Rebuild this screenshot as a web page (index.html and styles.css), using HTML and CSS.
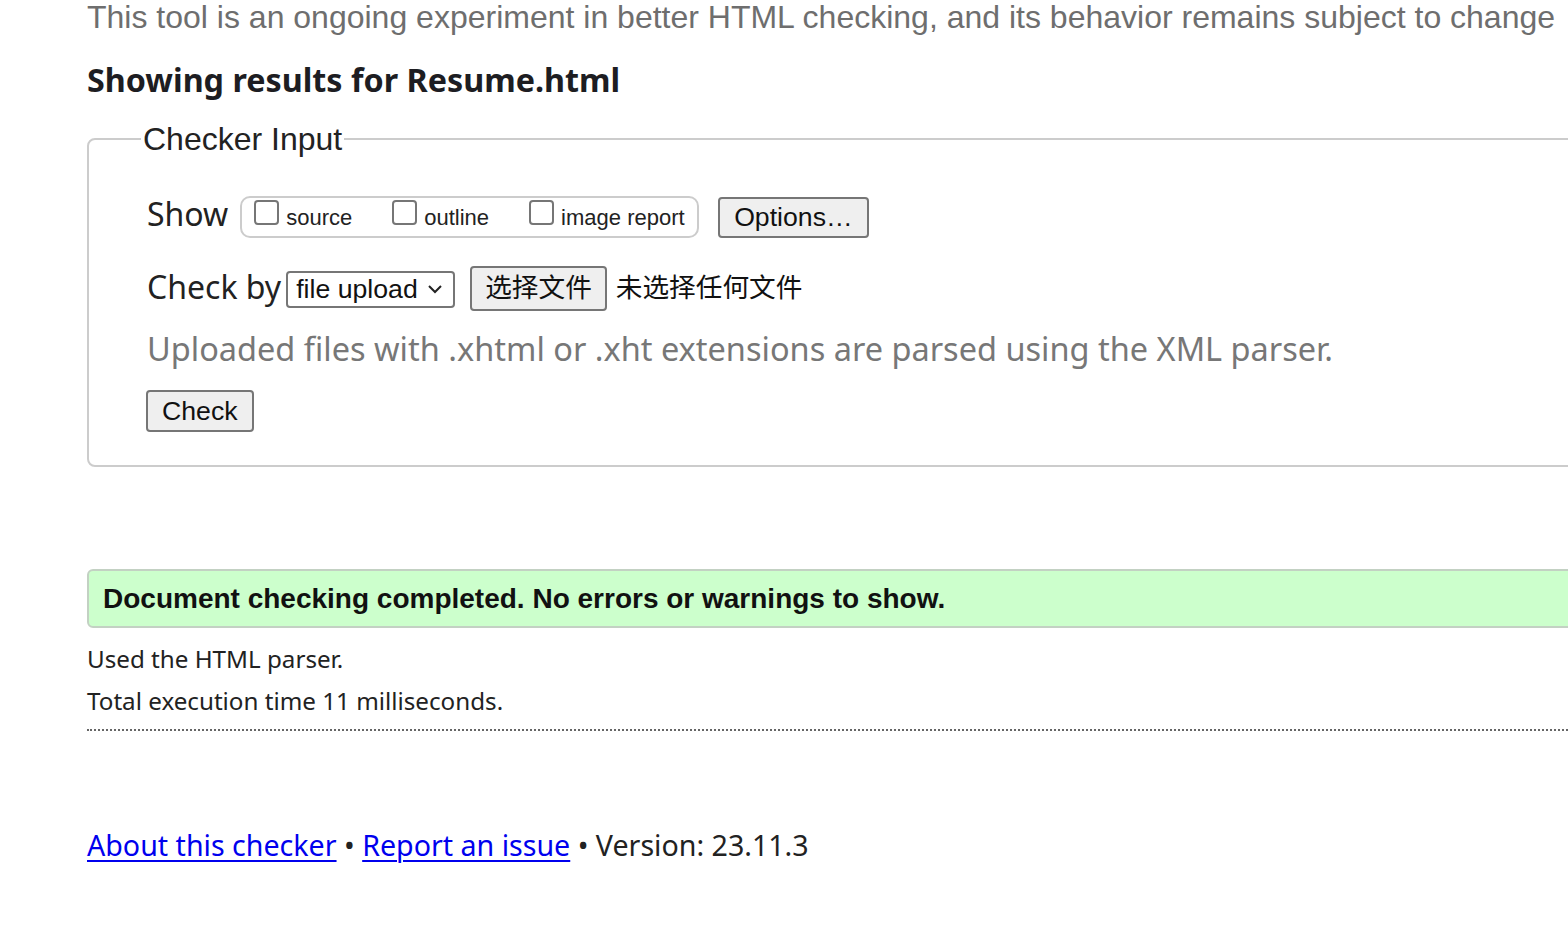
FILE: index.html
```html
<!DOCTYPE html>
<html lang="en">
<head>
<meta charset="utf-8">
<title>Showing results for Resume.html - Nu Html Checker</title>
<link rel="stylesheet" href="styles.css">
</head>
<body>
<div class="page">
  <p class="intro">This tool is an ongoing experiment in better HTML checking, and its behavior remains subject to change</p>
  <h2 class="title">Showing results for Resume.html</h2>
  <form class="checker-form">
    <fieldset class="checker">
      <legend class="checker-legend">Checker Input</legend>
      <div class="row show-row">
        <span class="row-label show-label">Show</span>
        <div class="opts">
          <label class="opt"><span class="box"></span><span class="opt-text">source</span></label>
          <label class="opt"><span class="box"></span><span class="opt-text">outline</span></label>
          <label class="opt"><span class="box"></span><span class="opt-text">image report</span></label>
        </div>
        <span class="btn options-btn">Options…</span>
      </div>
      <div class="row check-row">
        <span class="row-label checkby-label">Check by</span>
        <span class="select">file upload<svg class="chev" width="16" height="10" viewBox="0 0 16 10"><path d="M2 2 L8 8 L14 2" fill="none" stroke="#222" stroke-width="2"/></svg></span>
        <span class="file">
          <span class="btn file-btn">选择文件</span>
          <span class="file-text">未选择任何文件</span>
        </span>
      </div>
      <p class="hint">Uploaded files with .xhtml or .xht extensions are parsed using the XML parser.</p>
      <span class="btn check-btn">Check</span>
    </fieldset>
  </form>
  <div class="success">Document checking completed. No errors or warnings to show.</div>
  <p class="stat">Used the HTML parser.</p>
  <p class="stat">Total execution time 11 milliseconds.</p>
  <div class="sep"></div>
  <p class="footer"><a href="#">About this checker</a> • <a href="#">Report an issue</a> • Version: 23.11.3</p>
</div>
</body>
</html>
```
FILE: styles.css
```css
html, body {
  margin: 0;
  padding: 0;
  overflow: hidden;
  background: #fff;
}
.page {
  width: 1700px;
  padding-left: 87px;
  color: #222;
  font-family: "Noto Sans", "Open Sans", sans-serif;
}
.intro {
  margin: 0;
  font-family: "Liberation Sans", Arial, sans-serif;
  font-size: 32px;
  line-height: 35px;
  color: #6e6e6e;
  white-space: nowrap;
}
.title {
  margin: 23.6px 0 0;
  font-size: 32.3px;
  line-height: 40px;
  font-weight: 700;
  color: #1d1d22;
}
.checker-form {
  margin: 22.4px 0 0;
}
.checker {
  margin: 0;
  width: 1620px;
  border: 2px solid #cccccc;
  border-radius: 8px;
  padding: 0 0 33px 58px;
  box-sizing: border-box;
}
.checker-legend {
  margin-left: -6px;
  padding: 0 2px;
  font-family: "Liberation Sans", Arial, sans-serif;
  font-size: 32px;
  line-height: 36px;
  color: #222;
}
.row {
  display: flex;
  align-items: flex-start;
}
.show-row {
  margin-top: 39px;
}
.row-label {
  font-size: 32px;
  line-height: 40px;
  color: #222;
}
.show-label {
  margin-top: -2px;
  margin-right: 12px;
}
.opts {
  display: flex;
  align-items: flex-start;
  gap: 40px;
  box-sizing: border-box;
  height: 42px;
  padding: 2px 12px 0 12px;
  border: 2px solid #cccccc;
  border-radius: 10px;
  font-family: "Liberation Sans", Arial, sans-serif;
  font-size: 22px;
}
.opt {
  display: inline-flex;
  align-items: baseline;
}
.box {
  display: inline-block;
  width: 25px;
  height: 25px;
  box-sizing: border-box;
  border: 2px solid #767676;
  border-radius: 4px;
  background: #fff;
  margin-right: 7px;
}
.opt-text {
  line-height: 25px;
  color: #222;
}
.btn {
  display: inline-block;
  box-sizing: border-box;
  border: 2px solid #767676;
  border-radius: 4px;
  background: #efefef;
  font-family: "Liberation Sans", Arial, sans-serif;
  font-size: 26.67px;
  line-height: 30px;
  padding: 4px 14px;
  color: #111;
}
.options-btn {
  margin-left: 19px;
  margin-top: 1px;
  padding: 3.5px 14.5px;
}
.check-row {
  margin-top: 28px;
}
.checkby-label {
  margin-top: 0.6px;
  margin-right: 5px;
}
.select {
  display: inline-flex;
  align-items: center;
  box-sizing: border-box;
  height: 37px;
  width: 169px;
  margin-top: 5px;
  padding: 0 10px 0 8px;
  border: 2px solid #767676;
  border-radius: 4px;
  font-family: "Liberation Sans", Arial, sans-serif;
  font-size: 26.67px;
  line-height: 33px;
  color: #111;
}
.chev {
  margin-left: auto;
}
.file {
  display: inline-flex;
  align-items: baseline;
  margin-left: 15px;
  font-family: "Liberation Sans", "Noto Sans CJK SC", sans-serif;
  font-size: 26.67px;
}
.file-btn {
  font-family: "Liberation Sans", "Noto Sans CJK SC", sans-serif;
  line-height: 37px;
  padding: 2px 13px;
}
.file-text {
  margin-left: 9px;
  line-height: 37px;
  color: #111;
}
.hint {
  margin: 17.6px 0 0;
  font-size: 32.5px;
  line-height: 40px;
  color: #777;
}
.check-btn {
  margin-top: 21.4px;
  margin-left: -1px;
}
.success {
  margin-top: 102px;
  width: 1620px;
  box-sizing: border-box;
  border: 2px solid #c3d1c3;
  border-radius: 6px;
  background: #ccffcc;
  padding: 12px 12px 11px 14px;
  font-family: "Liberation Sans", Arial, sans-serif;
  font-weight: 700;
  font-size: 28px;
  line-height: 32px;
  color: #111;
}
.stat {
  margin: 0;
  font-size: 24.2px;
  line-height: 42px;
  color: #222;
}
.success + .stat {
  margin-top: 9.7px;
}
.sep {
  margin-top: 7.3px;
  width: 1620px;
  border-top: 2px dotted #666;
}
.footer {
  margin: 93.8px 0 0;
  font-size: 28.6px;
  line-height: 40px;
  color: #222;
}
.footer a {
  color: #0000ee;
  text-decoration: underline;
  text-underline-offset: 4px;
  text-decoration-thickness: 2px;
}
```
